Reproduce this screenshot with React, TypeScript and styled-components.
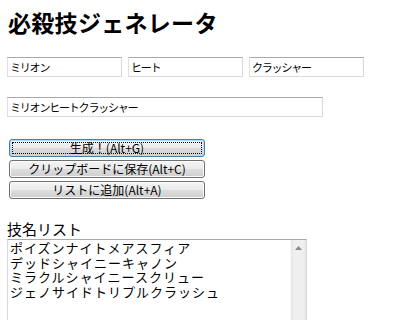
import { useState } from "react";
import styled, { createGlobalStyle } from "styled-components";

const GlobalStyle = createGlobalStyle`
  body {
    margin: 0;
    background: #ffffff;
    font-family: "Noto Sans CJK JP", "Noto Sans", sans-serif;
    color: #000000;
  }
`;

const Page = styled.div`
  padding: 8px 0 0 7px;
  display: flex;
  flex-direction: column;
`;

const Title = styled.h1`
  margin: 0 0 0 1px;
  font-size: 23px;
  line-height: 28px;
  font-weight: bold;
  letter-spacing: 0.3px;
`;

const PartsRow = styled.div`
  display: flex;
  gap: 6px;
  margin-top: 21px;
`;

const TextBox = styled.input<{ $width: number }>`
  box-sizing: border-box;
  width: ${({ $width }) => $width}px;
  height: 20px;
  margin: 0;
  padding: 0 2px;
  border: 1px solid #d5d9dd;
  border-top-color: #a6abb0;
  border-left-color: #dde1e5;
  font-family: "Noto Sans CJK JP", sans-serif;
  font-size: 11px;
  letter-spacing: -1.2px;
  color: #000000;
  background: #ffffff;
  outline: none;
`;

const ResultRow = styled.div`
  margin-top: 20px;
  display: flex;
`;

const ButtonStack = styled.div`
  display: flex;
  flex-direction: column;
  gap: 3px;
  margin: 22px 0 0 2px;
`;

const ActionButton = styled.button<{ $focused?: boolean }>`
  position: relative;
  box-sizing: border-box;
  width: 196px;
  height: 18px;
  padding: 0;
  border: 1px solid ${({ $focused }) => ($focused ? "#3c7fb1" : "#707070")};
  border-radius: 3px;
  background: linear-gradient(#f4f4f4 0%, #ebebeb 48%, #dddddd 52%, #cfcfcf 100%);
  box-shadow: ${({ $focused }) =>
    $focused ? "inset 0 0 0 1px #b8dcf2" : "inset 0 0 0 1px #fbfbfb"};
  font-family: "Noto Sans CJK JP", sans-serif;
  font-size: 12px;
  line-height: 14px;
  color: #000000;
  cursor: pointer;

  &::after {
    content: "";
    display: ${({ $focused }) => ($focused ? "block" : "none")};
    position: absolute;
    inset: 2px;
    border: 1px dotted #000000;
    pointer-events: none;
  }
`;

const ListLabel = styled.div`
  margin-top: 21px;
  font-size: 15px;
  line-height: 17px;
`;

const ListFrame = styled.div`
  margin-top: 2px;
  box-sizing: border-box;
  width: 300px;
  height: 100px;
  display: flex;
  border: 1px solid #d5d9dd;
  border-top-color: #a6abb0;
  background: #ffffff;
`;

const ListArea = styled.textarea`
  flex: 1;
  margin: 0;
  padding: 1px 2px;
  border: none;
  outline: none;
  resize: none;
  overflow: hidden;
  font-family: "Noto Sans CJK JP", sans-serif;
  font-size: 13px;
  line-height: 14.5px;
  letter-spacing: 1px;
  color: #000000;
  background: transparent;
`;

const ScrollTrack = styled.div`
  width: 16px;
  background: linear-gradient(90deg, #e6e6e6, #f0f0f0 20%, #f0f0f0 80%, #e6e6e6);
  border-left: 1px solid #f8f8f8;
  display: flex;
  justify-content: center;
  padding-top: 6px;
  box-sizing: border-box;
`;

const names = [
  "ポイズンナイトメアスフィア",
  "デッドシャイニーキャノン",
  "ミラクルシャイニースクリュー",
  "ジェノサイドトリプルクラッシュ",
];

export default function App() {
  const [parts, setParts] = useState(["ミリオン", "ヒート", "クラッシャー"]);

  return (
    <Page>
      <GlobalStyle />
      <Title>必殺技ジェネレータ</Title>

      <PartsRow>
        {parts.map((p, i) => (
          <TextBox
            key={i}
            $width={115}
            value={p}
            onChange={(e) => setParts(parts.map((x, j) => (j === i ? e.target.value : x)))}
          />
        ))}
      </PartsRow>

      <ResultRow>
        <TextBox $width={316} value={parts.join("")} readOnly />
      </ResultRow>

      <ButtonStack>
        <ActionButton $focused>生成！(Alt+G)</ActionButton>
        <ActionButton>クリップボードに保存(Alt+C)</ActionButton>
        <ActionButton>リストに追加(Alt+A)</ActionButton>
      </ButtonStack>

      <ListLabel>技名リスト</ListLabel>
      <ListFrame>
        <ListArea value={names.join("\n")} readOnly />
        <ScrollTrack>
          <svg width="7" height="4" viewBox="0 0 7 4">
            <path d="M0 4 L3.5 0 L7 4 Z" fill="#8a8a8a" />
          </svg>
        </ScrollTrack>
      </ListFrame>
    </Page>
  );
}
